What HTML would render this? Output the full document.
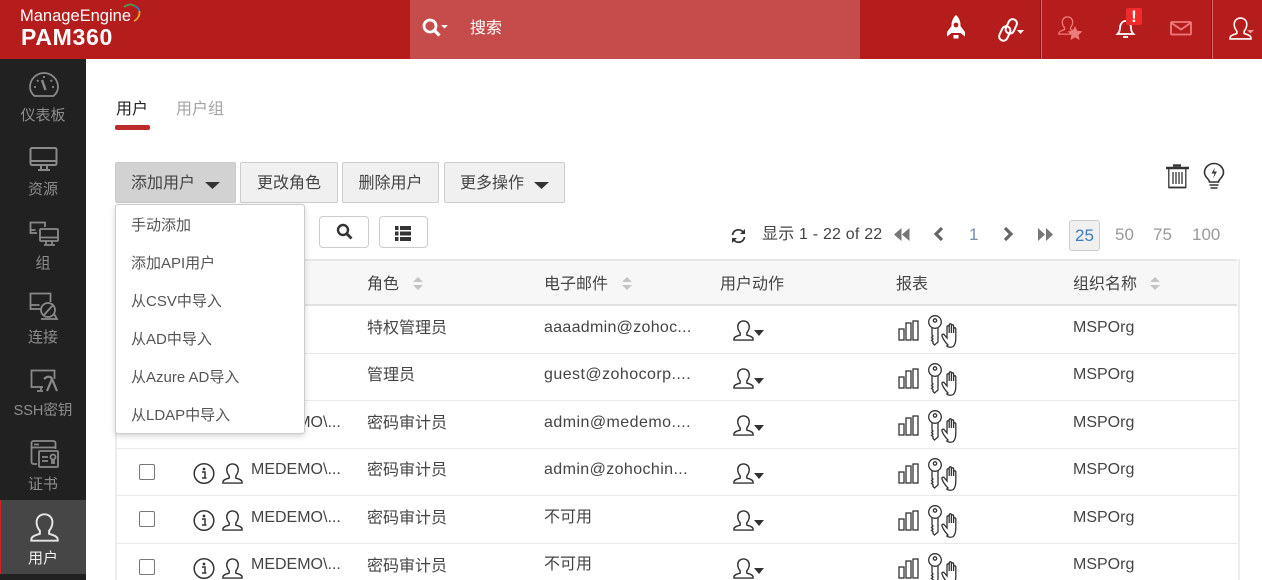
<!DOCTYPE html>
<html lang="zh"><head><meta charset="utf-8"><title>PAM360</title>
<style>
html,body{margin:0;padding:0;width:1262px;height:580px;overflow:hidden;background:#fff}
body{position:relative;font-family:"Liberation Sans","Noto Sans CJK SC",sans-serif;font-size:16px;color:#444}
.a{position:absolute;white-space:nowrap;line-height:20px}
.ln{position:absolute;left:117px;width:1120px;height:1px;background:#e8e8e8}
.nav{position:absolute;left:0;width:86px;text-align:center;font-size:15px;color:#8d8d8d;line-height:20px}
.btn{position:absolute;top:162px;height:39px;border:1px solid #ccc;border-radius:2px;background:#f0f0f0;line-height:41px;text-align:center;font-size:16px;color:#444}
.cb{position:absolute;left:139px;width:14px;height:14px;border:1.5px solid #777;border-radius:2px}
.mi{position:absolute;left:131px;font-size:15px;line-height:20px;color:#555;white-space:nowrap}
.pg{position:absolute;top:225px;line-height:20px;font-size:17px;color:#999;white-space:nowrap}
svg{position:absolute;overflow:visible}
</style></head><body>
<svg width="0" height="0" style="left:0;top:0"><defs>
<symbol id="u" viewBox="0 0 22 22" overflow="visible"><path d="M7.500 13.500C6 11.700 5 9.500 5 7 5 3.500 7.500 1 11 1s6 2.500 6 6c0 2.500-1 4.700-2.500 6.500v2.300c2 .8 6.500 1.500 6.500 4.200v1H1v-1c0-2.700 4.500-3.400 6.500-4.200z" fill="none" stroke="currentColor" stroke-width="1.500"/></symbol>
<symbol id="r" viewBox="0 0 62 32" overflow="visible"><g fill="none" stroke="#333" stroke-width="1.300"><rect x="1" y="14" width="5" height="11"/><rect x="8" y="8" width="5" height="17"/><rect x="15" y="6" width="5" height="19"/><circle cx="37" cy="7" r="6.300"/><circle cx="37" cy="5.500" r="1.700"/><path d="M40 13v14l-3.500 3-1.500-1.500v-2l-1.500-1 1.500-1.500-1.500-1.500 1.500-1.500-1-1V13"/><path d="M50 30c-2-2-5-6-6-9-.5-1.800 1.500-2.500 2.500-1l2.500 3V12c0-1.600 2.200-1.600 2.200 0v6-8c0-1.600 2.200-1.600 2.200 0v8-7c0-1.600 2.200-1.600 2.200 0v7-4c0-1.600 2.200-1.600 2.200 0v9c0 4-1 7-2.500 8.500-2 1.200-5 1-6.500-.5z"/></g></symbol>
</defs></svg>

<!-- header -->
<div style="position:absolute;left:0;top:0;width:1262px;height:59px;background:#b51c1c"></div>
<div class="a" style="left:20px;top:6px;font-size:16.500px;color:#fff">ManageEngine</div>
<svg style="left:124px;top:3px" width="18" height="20" viewBox="0 0 18 20" fill="none" stroke-width="1.800"><path d="M0 4C4 1 8 1 11 3" stroke="#4d9a4a"/><path d="M11 3c2 1 3.500 2.500 4.300 5" stroke="#2d7fb8"/><path d="M15.300 8c.8 4-1.300 8-5.300 10" stroke="#e8a72c"/></svg>
<div class="a" style="left:21px;top:24px;font-size:23px;font-weight:bold;color:#fff;letter-spacing:.7px;line-height:26px">PAM360</div>
<div style="position:absolute;left:410px;top:0;width:450px;height:59px;background:#c64c4c"></div>
<svg style="left:422px;top:18px" width="26" height="20" viewBox="0 0 26 20"><circle cx="8" cy="8" r="6" fill="none" stroke="#fff" stroke-width="2.800"/><path d="M12.500 12.500l5 5" stroke="#fff" stroke-width="3.200"/><path d="M19 7h7l-3.500 3.500z" fill="#fff"/></svg>
<div class="a" style="left:470px;top:19px;font-size:16px;color:#fff">搜索</div>

<svg style="left:947px;top:15px" width="18" height="25" viewBox="0 0 18 25"><path d="M9 0c3.200 3 4.500 6.500 4.500 10v8h-9v-8C4.500 6.500 5.800 3 9 0z" fill="#fff"/><circle cx="9" cy="10" r="2.400" fill="#b51c1c"/><path d="M4.500 11L0 17v4.500L4.500 18zM13.500 11L18 17v4.500L13.500 18z" fill="#fff"/><path d="M6.500 20h5v3.500h-5z" fill="#fff"/></svg>
<svg style="left:999px;top:18px" width="26" height="24" viewBox="0 0 26 24" fill="none" stroke="#fff" stroke-width="2"><rect x="8" y="1" width="8.500" height="15" rx="4.200" transform="rotate(25 12.500 8.500)"/><rect x="1.500" y="8" width="8.500" height="15" rx="4.200" transform="rotate(25 5.800 15.500)"/><path d="M18 12h7l-3.500 4z" fill="#fff" stroke="none"/></svg>
<div style="position:absolute;left:1040px;top:0;width:1px;height:59px;background:#8f1414"></div><div style="position:absolute;left:1041px;top:0;width:1px;height:59px;background:#d66a6a"></div>
<svg style="left:1058px;top:16px;color:#ee7b7b" width="19" height="19"><use href="#u" width="19" height="19"/></svg>
<svg style="left:1058px;top:16px" width="26" height="26" viewBox="0 0 26 26"><path d="M17 10l2.200 4.800 5.300.6-4 3.500 1.100 5.100-4.600-2.600-4.600 2.600 1.100-5.100-4-3.500 5.300-.6z" fill="#ee7b7b"/></svg>
<svg style="left:1115px;top:17px" width="22" height="22" viewBox="0 0 22 22" fill="none" stroke="#fff" stroke-width="1.800"><path d="M2.500 17c1.500-1.500 2.500-3 2.500-6 0-4 2.500-7 5.500-7s5.500 3 5.500 7c0 3 1 4.500 2.500 6z"/><path d="M8 20h5"/></svg>
<div style="position:absolute;left:1126px;top:8px;width:16px;height:17px;background:#f12b2b;border-radius:2px;color:#fff;font-weight:bold;font-size:17px;line-height:17px;text-align:center">!</div>
<svg style="left:1170px;top:21px" width="22" height="15" viewBox="0 0 22 15" fill="none" stroke="#ee7b7b" stroke-width="1.800"><rect x="1" y="1" width="20" height="12.500" rx="1"/><path d="M1.500 2l9.500 6.500L20.500 2"/></svg>
<div style="position:absolute;left:1211px;top:0;width:1px;height:59px;background:#8f1414"></div><div style="position:absolute;left:1212px;top:0;width:1px;height:59px;background:#d66a6a"></div>
<svg style="left:1229px;top:17px;color:#fff" width="23" height="23"><use href="#u" width="23" height="23"/></svg>
<svg style="left:1247px;top:30px" width="8" height="4"><path d="M0 0h7l-3.500 3.500z" fill="#ee9a9a"/></svg>

<!-- sidebar -->
<div style="position:absolute;left:0;top:59px;width:86px;height:521px;background:#212121"></div>
<div style="position:absolute;left:0;top:500px;width:86px;height:74px;background:#464646"></div>
<div style="position:absolute;left:0;top:500px;width:1px;height:74px;background:#cc2222"></div>

<svg style="left:29px;top:72px" width="30" height="26" viewBox="0 0 30 26" fill="none" stroke="#8a8a8a" stroke-width="1.800"><path d="M5.500 24C2.500 21.500 1 18.500 1 15A14 14 0 0 1 29 15c0 3.500-1.500 6.500-4.500 9z"/><path d="M13 8l3.500 10" stroke-width="2.400"/><path d="M5 15h2M23 15h2M8 8l1.500 1.500M21.500 9.500 23 8M15 4v2"/></svg>
<div class="nav" style="top:106px">仪表板</div>
<svg style="left:29px;top:146px" width="30" height="26" viewBox="0 0 30 26" fill="none" stroke="#8a8a8a" stroke-width="2"><rect x="1.500" y="2" width="26" height="17" rx="1.500"/><path d="M1.500 15h26M12 19v4M18 19v4M9 24h12"/></svg>
<div class="nav" style="top:180px">资源</div>
<svg style="left:29px;top:221px" width="30" height="26" viewBox="0 0 30 26" fill="none" stroke="#8a8a8a" stroke-width="1.800"><path d="M8 12H1.500V1.500h14.500V6M1.500 9h5"/><rect x="11" y="8" width="18" height="12" rx="1"/><path d="M11 16.500h18M17 20v3M23 20v3M15 24h11"/></svg>
<div class="nav" style="top:254px">组</div>
<svg style="left:29px;top:292px" width="30" height="30" viewBox="0 0 30 30" fill="none" stroke="#8a8a8a" stroke-width="1.800"><path d="M12 17H1.500V1.500h20V10M1.500 13h9"/><circle cx="19" cy="18" r="7"/><path d="M15 23l9-10M12 27h16l-3-5"/></svg>
<div class="nav" style="top:328px">连接</div>
<svg style="left:30px;top:369px" width="30" height="28" viewBox="0 0 30 28" fill="none" stroke="#8a8a8a" stroke-width="1.800"><path d="M13 18H1.500V1.500h23V10M11 18v3M7 22h6"/><path d="M14 10c3-3 7-3 8 0l-5 12M22 10l5 12" stroke-width="2.200"/></svg>
<div class="nav" style="top:401px;font-size:14.500px">SSH密钥</div>
<svg style="left:30px;top:440px" width="30" height="30" viewBox="0 0 30 30" fill="none" stroke="#8a8a8a" stroke-width="1.800"><path d="M7 24H3.500a2 2 0 0 1-2-2V3a2 2 0 0 1 2-2h20a2 2 0 0 1 2 2v6M1.500 7.500h24M4 4.500h5"/><rect x="9" y="11" width="19" height="16" rx="1"/><path d="M12 17h6M12 21h6"/><circle cx="23" cy="17" r="2.500"/><path d="M22 20v4M24 20v4"/></svg>
<div class="nav" style="top:475px">证书</div>
<svg style="left:30px;top:513px;color:#e6e6e6" width="29" height="29"><use href="#u" width="29" height="29"/></svg>
<div class="nav" style="top:549px;color:#f0f0f0">用户</div>

<!-- tabs -->
<div class="a" style="left:116px;top:100px;font-size:16px;color:#222">用户</div>
<div style="position:absolute;left:115px;top:125px;width:35px;height:5px;background:#bd2a2a;border-radius:2px"></div>
<div class="a" style="left:176px;top:100px;font-size:16px;color:#a3a3a3">用户组</div>

<!-- buttons -->
<div class="btn" style="left:115px;width:119px;background:#d2d2d2;text-align:left;text-indent:15px">添加用户</div>
<svg style="left:205px;top:182px" width="15" height="7"><path d="M0 0h15l-7.500 7z" fill="#333"/></svg>
<div class="btn" style="left:240px;width:96px">更改角色</div>
<div class="btn" style="left:342px;width:95px">删除用户</div>
<div class="btn" style="left:444px;width:119px;text-align:left;text-indent:15px">更多操作</div>
<svg style="left:534px;top:182px" width="15" height="7"><path d="M0 0h15l-7.500 7z" fill="#333"/></svg>

<svg style="left:1165px;top:164px" width="25" height="25" viewBox="0 0 25 25" fill="none" stroke="#333" stroke-width="1.600"><path d="M1 4h23" stroke-width="2.400"/><path d="M8 1.500h8" stroke-width="2.400"/><path d="M3.800 5v18.500h17V5M8 8v12M11 8v12M14 8v12M17 8v12" stroke-width="1.300"/><path d="M3.800 23.500h17" stroke-width="1.800"/></svg>
<svg style="left:1203px;top:163px" width="22" height="27" viewBox="0 0 22 27" fill="none" stroke="#333" stroke-width="1.600"><path d="M6.500 19c0-3-5-4.500-5-9.500a9.500 9 0 0 1 19 0c0 5-5 6.500-5 9.500z"/><path d="M6.500 22h9M7.500 25h7"/><path d="M12 4.500l-3.500 6h3l-1.500 5 4-7h-3z" fill="#333" stroke="none"/></svg>

<!-- toolbar -->
<div style="position:absolute;left:319px;top:216px;width:48px;height:30px;border:1px solid #ccc;border-radius:4px"></div>
<svg style="left:336px;top:223px" width="17" height="17" viewBox="0 0 17 17"><circle cx="7" cy="7" r="5" fill="none" stroke="#333" stroke-width="2.400"/><path d="M10.500 10.500l5 5" stroke="#333" stroke-width="2.800"/></svg>
<div style="position:absolute;left:379px;top:216px;width:47px;height:30px;border:1px solid #ccc;border-radius:4px"></div>
<svg style="left:395px;top:226px" width="16" height="15" viewBox="0 0 16 15" fill="#333"><rect width="3.500" height="4"/><rect x="5" width="11" height="4"/><rect y="5.500" width="3.500" height="4"/><rect x="5" y="5.500" width="11" height="4"/><rect y="11" width="3.500" height="4"/><rect x="5" y="11" width="11" height="4"/></svg>

<!-- pagination -->
<svg style="left:731px;top:228px" width="15" height="16" viewBox="0 0 15 16" fill="none" stroke="#333" stroke-width="1.700"><path d="M1.500 7C2 3.500 5 1.500 8 1.800c2 .2 3.500 1.200 4.500 2.700M13.500 9c-.5 3.500-3.500 5.500-6.500 5.200-2-.2-3.500-1.200-4.500-2.700"/><path d="M14 1v5h-5z" fill="#333" stroke="none"/><path d="M1 15v-5h5z" fill="#333" stroke="none"/></svg>
<div class="a" style="left:762px;top:225px;font-size:16px;color:#444;letter-spacing:.2px;margin-top:-1px;padding-top:1px">显示 1 - 22 of 22</div>
<svg style="left:894px;top:228px" width="16" height="13" viewBox="0 0 16 13" fill="#777"><path d="M7.500 0v13L0 6.500zM15.500 0v13L8 6.500z"/></svg>
<svg style="left:932px;top:227px" width="12" height="14" viewBox="0 0 12 14" fill="none" stroke="#666" stroke-width="3.200"><path d="M10 1L4 7l6 6"/></svg>
<div class="pg" style="left:969px;color:#7a8ea8">1</div>
<svg style="left:1003px;top:227px" width="12" height="14" viewBox="0 0 12 14" fill="none" stroke="#666" stroke-width="3.200"><path d="M2 1l6 6-6 6"/></svg>
<svg style="left:1038px;top:228px" width="15" height="13" viewBox="0 0 15 13" fill="#777"><path d="M0 0v13l7-6.500zM8 0v13l7-6.500z"/></svg>
<div style="position:absolute;left:1069px;top:220px;width:29px;height:29px;background:#f0f0f0;border:1px solid #ccc;border-radius:3px;text-align:center;line-height:30px;font-size:17px;color:#3b7cbd">25</div>
<div class="pg" style="left:1115px">50</div>
<div class="pg" style="left:1153px">75</div>
<div class="pg" style="left:1192px">100</div>

<!-- table -->
<div style="position:absolute;left:115px;top:259px;width:1122px;height:47px;background:#f7f7f7;border-top:2px solid #e6e6e6;border-bottom:2px solid #e2e2e2;box-sizing:border-box"></div>
<div style="position:absolute;left:115px;top:259px;width:2px;height:321px;background:#ececec"></div>
<div style="position:absolute;left:1238px;top:259px;width:2px;height:321px;background:#ececec"></div>
<div class="ln" style="top:353px"></div><div class="ln" style="top:400px"></div><div class="ln" style="top:448px"></div><div class="ln" style="top:495px"></div><div class="ln" style="top:543px"></div>

<div class="a" style="left:367px;top:275px">角色</div>
<div class="a" style="left:544px;top:275px">电子邮件</div>
<div class="a" style="left:720px;top:275px">用户动作</div>
<div class="a" style="left:896px;top:275px">报表</div>
<div class="a" style="left:1073px;top:275px">组织名称</div>
<svg style="left:413px;top:276px" width="10" height="15"><path d="M0 6l5-5 5 5zM0 9l5 5 5-5z" fill="#c4c4c4"/></svg>
<svg style="left:622px;top:276px" width="10" height="15"><path d="M0 6l5-5 5 5zM0 9l5 5 5-5z" fill="#c4c4c4"/></svg>
<svg style="left:1150px;top:276px" width="10" height="15"><path d="M0 6l5-5 5 5zM0 9l5 5 5-5z" fill="#c4c4c4"/></svg>

<!-- rows -->
<div class="a" style="left:367px;top:319px">特权管理员</div><div class="a" style="left:544px;top:318px;letter-spacing:.3px">aaaadmin@zohoc...</div><div class="a" style="left:1073px;top:318px">MSPOrg</div>
<div class="a" style="left:367px;top:366px">管理员</div><div class="a" style="left:544px;top:365px;letter-spacing:.45px">guest@zohocorp....</div><div class="a" style="left:1073px;top:365px">MSPOrg</div>
<div class="a" style="left:251px;top:413px">MEDEMO\...</div><div class="a" style="left:367px;top:414px">密码审计员</div><div class="a" style="left:544px;top:413px;letter-spacing:.45px">admin@medemo....</div><div class="a" style="left:1073px;top:413px">MSPOrg</div>
<div class="a" style="left:251px;top:460px">MEDEMO\...</div><div class="a" style="left:367px;top:461px">密码审计员</div><div class="a" style="left:544px;top:460px;letter-spacing:.4px">admin@zohochin...</div><div class="a" style="left:1073px;top:460px">MSPOrg</div>
<div class="a" style="left:251px;top:508px">MEDEMO\...</div><div class="a" style="left:367px;top:509px">密码审计员</div><div class="a" style="left:544px;top:508px">不可用</div><div class="a" style="left:1073px;top:508px">MSPOrg</div>
<div class="a" style="left:251px;top:555px">MEDEMO\...</div><div class="a" style="left:367px;top:557px">密码审计员</div><div class="a" style="left:544px;top:555px">不可用</div><div class="a" style="left:1073px;top:555px">MSPOrg</div>

<div class="cb" style="top:464px"></div><div class="cb" style="top:511px"></div><div class="cb" style="top:559px"></div>

<!-- info + user in rows -->
<svg style="left:193px;top:463px" width="22" height="22" viewBox="0 0 22 22"><circle cx="11" cy="10.500" r="9.800" fill="none" stroke="#333" stroke-width="1.500"/><path d="M9 9h3v6h1.500M9 15h4.500" fill="none" stroke="#333" stroke-width="1.500"/><circle cx="11" cy="6" r="1.400" fill="#333"/></svg>
<svg style="left:193px;top:510px" width="22" height="22" viewBox="0 0 22 22"><circle cx="11" cy="10.500" r="9.800" fill="none" stroke="#333" stroke-width="1.500"/><path d="M9 9h3v6h1.500M9 15h4.500" fill="none" stroke="#333" stroke-width="1.500"/><circle cx="11" cy="6" r="1.400" fill="#333"/></svg>
<svg style="left:193px;top:558px" width="22" height="22" viewBox="0 0 22 22"><circle cx="11" cy="10.500" r="9.800" fill="none" stroke="#333" stroke-width="1.500"/><path d="M9 9h3v6h1.500M9 15h4.500" fill="none" stroke="#333" stroke-width="1.500"/><circle cx="11" cy="6" r="1.400" fill="#333"/></svg>
<svg style="left:222px;top:463px;color:#333" width="21" height="21"><use href="#u" width="21" height="21"/></svg>
<svg style="left:222px;top:510px;color:#333" width="21" height="21"><use href="#u" width="21" height="21"/></svg>
<svg style="left:222px;top:558px;color:#333" width="21" height="21"><use href="#u" width="21" height="21"/></svg>

<!-- action icons -->
<svg style="left:733px;top:320px;color:#333" width="21" height="21"><use href="#u" width="21" height="21"/></svg><svg style="left:754px;top:330px" width="10" height="6"><path d="M0 0h10L5 6z" fill="#333"/></svg>
<svg style="left:733px;top:368px;color:#333" width="21" height="21"><use href="#u" width="21" height="21"/></svg><svg style="left:754px;top:378px" width="10" height="6"><path d="M0 0h10L5 6z" fill="#333"/></svg>
<svg style="left:733px;top:415px;color:#333" width="21" height="21"><use href="#u" width="21" height="21"/></svg><svg style="left:754px;top:425px" width="10" height="6"><path d="M0 0h10L5 6z" fill="#333"/></svg>
<svg style="left:733px;top:463px;color:#333" width="21" height="21"><use href="#u" width="21" height="21"/></svg><svg style="left:754px;top:473px" width="10" height="6"><path d="M0 0h10L5 6z" fill="#333"/></svg>
<svg style="left:733px;top:510px;color:#333" width="21" height="21"><use href="#u" width="21" height="21"/></svg><svg style="left:754px;top:520px" width="10" height="6"><path d="M0 0h10L5 6z" fill="#333"/></svg>
<svg style="left:733px;top:558px;color:#333" width="21" height="21"><use href="#u" width="21" height="21"/></svg><svg style="left:754px;top:568px" width="10" height="6"><path d="M0 0h10L5 6z" fill="#333"/></svg>

<!-- report icons -->
<svg style="left:898px;top:315px" width="62" height="32"><use href="#r" width="62" height="32"/></svg>
<svg style="left:898px;top:363px" width="62" height="32"><use href="#r" width="62" height="32"/></svg>
<svg style="left:898px;top:410px" width="62" height="32"><use href="#r" width="62" height="32"/></svg>
<svg style="left:898px;top:458px" width="62" height="32"><use href="#r" width="62" height="32"/></svg>
<svg style="left:898px;top:505px" width="62" height="32"><use href="#r" width="62" height="32"/></svg>
<svg style="left:898px;top:553px" width="62" height="32"><use href="#r" width="62" height="32"/></svg>

<!-- dropdown -->
<div style="position:absolute;left:115px;top:204px;width:188px;height:228px;background:#fff;border:1px solid #ccc;border-radius:3px;box-shadow:0 2px 6px rgba(0,0,0,.18)"></div>
<div class="mi" style="top:216px">手动添加</div>
<div class="mi" style="top:254px">添加API用户</div>
<div class="mi" style="top:292px">从CSV中导入</div>
<div class="mi" style="top:330px">从AD中导入</div>
<div class="mi" style="top:368px">从Azure AD导入</div>
<div class="mi" style="top:406px">从LDAP中导入</div>
</body></html>
